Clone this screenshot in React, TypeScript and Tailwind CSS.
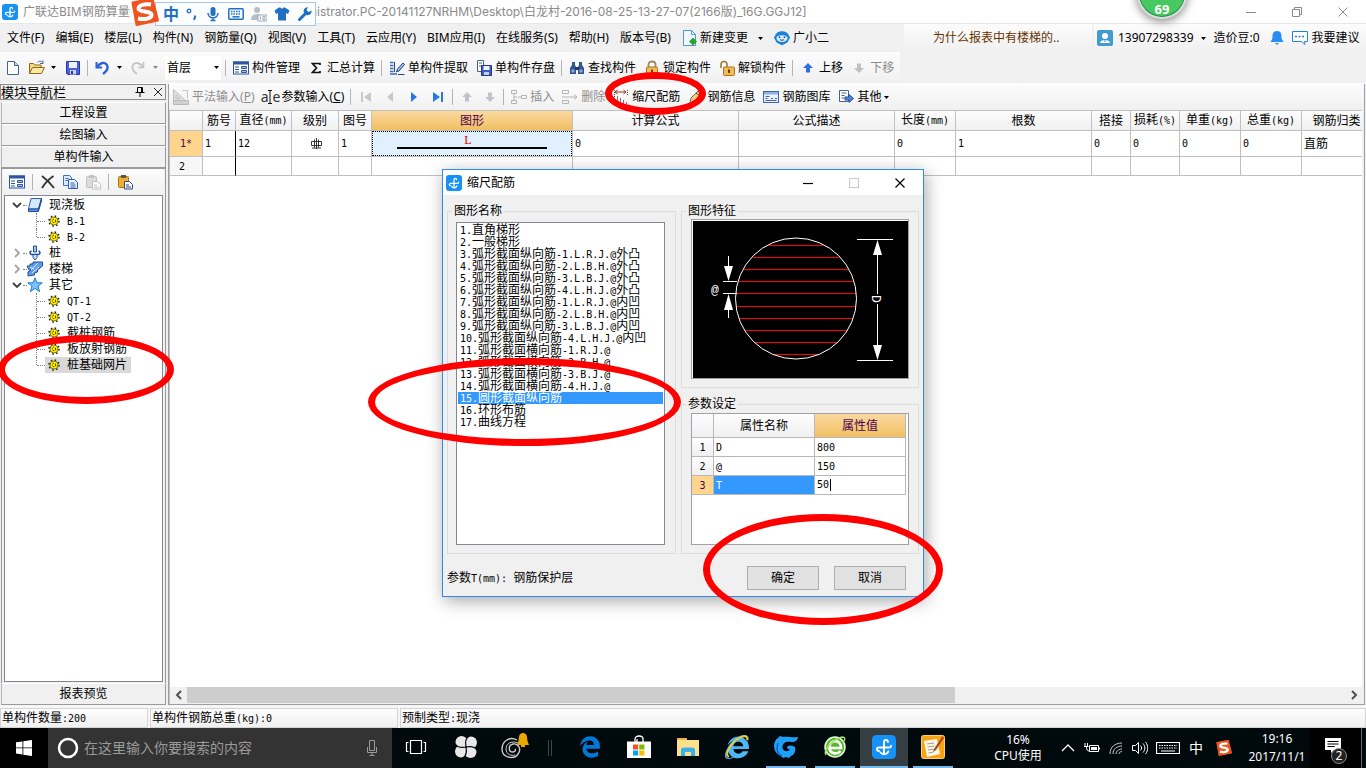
import React from "react";
import { FaEdgeLegacy, FaInternetExplorer } from "react-icons/fa";

/* Mixed-width text: half-width characters use a 6px monospace cell beside 12px ideographs. */
function Mix({ t }: { t: string }) {
  return (
    <>
      {t.split(/([\x20-\x7e]+)/).map((part, i) =>
        i % 2 ? (
          <span key={i} className="whitespace-pre font-['DejaVu_Sans_Mono',monospace] text-[10px]">
            {part}
          </span>
        ) : (
          part
        ),
      )}
    </>
  );
}

function Svg({ children, className = "size-4", box = "0 0 16 16" }: { children: React.ReactNode; className?: string; box?: string }) {
  return (
    <svg viewBox={box} className={`${className} shrink-0`} fill="none" aria-hidden="true">
      {children}
    </svg>
  );
}

/* ---------- icons ---------- */
const AppIcon = ({ className = "size-4" }: { className?: string }) => (
  <Svg className={className} box="0 0 24 24">
    <rect width="24" height="24" rx="4.5" fill="#1592f5" />
    <path d="M12 18.500V7c0-1.200.7-2 1.900-2 1.200 0 2 .8 2 2M12 12.500H7c-1.200 0-2 .7-2 1.700 0 1.100.8 1.800 2 1.800M12 12.500h5.200c1.100 0 1.800-.7 1.800-1.800M8.500 17.500c1 1.200 2.100 1.700 3.500 1.700 2 0 3.600-.9 4.300-2.700" stroke="#fff" strokeWidth="1.900" strokeLinecap="round" />
  </Svg>
);
const Sogou = ({ className }: { className: string }) => (
  <Svg className={className} box="0 0 28 28">
    <path d="M1.500 4.500 21.500 0.500 27 22.500 5.500 27Z" fill="#f0541e" stroke="#f0541e" strokeWidth="2" strokeLinejoin="round" />
    <path d="M20 6.500C14 5.500 7.500 7 7.500 10.500c0 4 13 2 13 6.500 0 3.500-7 5-13.500 3.500" stroke="#fff" strokeWidth="4" />
  </Svg>
);
const NewIcon = () => (
  <Svg>
    <path d="M2.500 1.500h7l4 4v9h-11z" fill="#fff" stroke="#45618f" />
    <path d="M9.500 1.500v4h4" fill="#c8daf2" stroke="#45618f" />
  </Svg>
);
const OpenIcon = () => (
  <Svg>
    <path d="M.5 13.500v-10h4l1.500 1.500h6v3" fill="#f7d77c" stroke="#8c6a1c" />
    <path d="M.5 13.500 3.500 7.500h12l-3 6z" fill="#ffe9a6" stroke="#8c6a1c" />
    <path d="M8.500 2.500c2-2 4-1.500 5 0M14 .5v3h-3" stroke="#45618f" />
  </Svg>
);
const SaveIcon = () => (
  <Svg>
    <path d="M1.500 1.500h13v13h-12l-1-1z" fill="#4660e0" stroke="#2a3a9e" />
    <path d="M4 2h8v6H4z" fill="#eef2ff" />
    <path d="M5 10h6v4.500H5z" fill="#c8d0f0" />
    <path d="M6 11h2v3H6z" fill="#2a3a9e" />
  </Svg>
);
const UndoIcon = () => (
  <Svg>
    <path d="M1.500 2v5.500H7" stroke="#2a62d8" strokeWidth="2" />
    <path d="M2 7C5 2.500 10 1.500 12 5c1.500 3-.5 6.500-4 9" stroke="#2a62d8" strokeWidth="2.400" />
  </Svg>
);
const RedoIcon = () => (
  <Svg>
    <path d="M12.500 2v5.500H7" stroke="#c4c4c4" strokeWidth="1.600" />
    <path d="M12 7C9 2.500 4 1.500 2 5c-1.500 3 .5 6.500 4 9" stroke="#c4c4c4" strokeWidth="1.800" />
  </Svg>
);
const FormIcon = () => (
  <Svg>
    <rect x=".5" y="2" width="15" height="12" fill="#fff" stroke="#2d55a0" />
    <path d="M0 1.500h16v3H0z" fill="#2d55a0" />
    <path d="M2 7h4M2 9.500h4M2 12h4" stroke="#2d55a0" />
    <path d="M8.500 6.500h5v2h-5zM8.500 10.500h5v2h-5z" fill="#a9c0e8" stroke="#2d55a0" />
  </Svg>
);
const SigmaIcon = () => (
  <Svg>
    <path d="M12 5V3.500H4.500L8.500 8l-4 4.500H12V11" stroke="#111" strokeWidth="1.700" />
  </Svg>
);
const ExtractIcon = () => (
  <Svg>
    <path d="M1 2.500h3.500M1 5.500h3.500M1 8.500h3.500M1 11.500h3.500M1 14h7" stroke="#3c68b8" strokeWidth="1.500" />
    <path d="M5.500 2v10" stroke="#24457f" />
    <path d="m7.500 12 1-3 5.500-6 1.500 1.500-5.500 6.500z" fill="#9cc0f0" stroke="#24457f" />
    <path d="M9 14.500h6.500" stroke="#24457f" />
  </Svg>
);
const StoreIcon = () => (
  <Svg>
    <path d="M1.500.5h6v11h-6zM3 3h3M3 6h3" fill="#fff" stroke="#45618f" />
    <path d="M5.500 5.500h10v10h-10z" fill="#3e5ccc" stroke="#22357e" />
    <path d="M7.500 6h6v4h-6z" fill="#eef2ff" />
    <path d="M8 12h5v3H8z" fill="#c8d0f0" />
  </Svg>
);
const FindIcon = () => (
  <Svg>
    <path d="M3 2h3v3l1 2v7H1V8l2-3zM10 2h3v3l2 3v6H9V7l1-2z" fill="#34558e" />
    <path d="M6 7h4v3H6z" fill="#22395f" />
    <path d="M2.500 9.500h3v3h-3zM10.500 9.500h3v3h-3z" fill="#86a9dd" />
  </Svg>
);
const LockIcon = ({ open = false }: { open?: boolean }) => (
  <Svg>
    {open ? (
      <path d="M2 8V4.500C2 .5 8 .5 8 4.500V7" stroke="#9a7a3a" strokeWidth="1.600" />
    ) : (
      <path d="M4.500 8V4.500C4.500.5 11.500.5 11.500 4.500V8" stroke="#9a8a6a" strokeWidth="1.800" />
    )}
    <rect x={open ? 4.5 : 2.5} y="7" width="11" height="8.500" rx="1" fill="#f3bd55" stroke="#a87420" />
    <path d={open ? "M10 9.500v3.500" : "M8 9.500v3.500"} stroke="#6a4410" strokeWidth="2" />
  </Svg>
);
const ArrowV = ({ down = false, color }: { down?: boolean; color: string }) => (
  <Svg>
    <path d={down ? "M8 13 3 8h3V3.500h4V8h3z" : "M8 3l5 5h-3v4.500H6V8H3z"} fill={color} />
  </Svg>
);
const FlatIcon = () => (
  <Svg>
    <path d="M.5 .5v11h12zM3 6v3.500h4z" fill="#e0e0e0" stroke="#bcbcbc" fillRule="evenodd" />
    <path d="M.5 11.500h15v4H.5z" fill="#d0d0d0" stroke="#b8b8b8" />
    <path d="M9 1.500h5.500v8" stroke="#c4c4c4" />
  </Svg>
);
const ParamIcon = () => (
  <span className="flex w-4 shrink-0 items-center justify-center text-sm leading-4 text-[#333]">
    a
    <Svg className="h-4 w-1" box="0 0 4 16">
      <path d="M0 1.500h4M0 14.500h4M2 1.500v13" stroke="#111" />
    </Svg>
    e
  </span>
);
const NavIcon = ({ kind }: { kind: "first" | "prev" | "next" | "last" }) => (
  <Svg>
    {kind === "first" && <path d="M3 3h2v10H3zM13 3v10L6 8z" fill="#c6c8cc" />}
    {kind === "prev" && <path d="M11 3v10L5 8z" fill="#c6c8cc" />}
    {kind === "next" && <path d="M5 3v10l6-5z" fill="#2478e8" />}
    {kind === "last" && <path d="M11 3h2v10h-2zM3 3v10l7-5z" fill="#2478e8" />}
  </Svg>
);
const InsertIcon = () => (
  <Svg>
    <path d="M.5 1.500h5v3h-5zM.5 11.500h5v3h-5zM10.500 6.500h5v3h-5zM3 4.500v7M3 8h3M7 8h3" stroke="#b4b4b4" />
  </Svg>
);
const DeleteIcon = () => (
  <Svg>
    <path d="M.5 1.500h6v3h-6zM.5 11.500h6v3h-6zM0 8h15M12 5.500 15 8l-3 2.500" stroke="#b4b4b4" />
  </Svg>
);
const ScaleIcon = () => (
  <Svg>
    <path d="M2 3h11M4.500 1 2 3l2.500 2M10.500 1 13 3l-2.500 2" stroke="#a03024" />
    <path d="M1.500 1v14M14.500 1v5" stroke="#444" strokeDasharray="1 1" />
    <path d="M4.500 7v8M7.500 9v6M10.500 11v4M13.500 13v2" stroke="#777" />
  </Svg>
);
const PencilIcon = () => (
  <Svg>
    <path d="m2 14 1-5 7-7 4 3-7 7z" fill="#f0d080" stroke="#665" />
    <path d="m8 4 4 3" stroke="#446" />
    <path d="M6 14c2-4 5-3 8-6" stroke="#4a6aa8" strokeWidth="1.500" />
  </Svg>
);
const LibraryIcon = () => (
  <Svg>
    <rect x=".5" y="2.500" width="15" height="11" fill="#eaf1fb" stroke="#3e66a8" />
    <path d="M1 3h14v2.500H1z" fill="#8fb2e4" />
    <path d="M2.500 7.500h4M2.500 9.500h2M8 9.500h2M12 9.500h2M2.500 11.500h11" stroke="#3e66a8" />
  </Svg>
);
const OtherIcon = () => (
  <Svg>
    <path d="M1.500 1.500h9v11h-9zM3.500 4h5M3.500 6.500h3M3.500 9h3" fill="#fff" stroke="#45618f" />
    <path d="M7 8h4V5.500l4.500 4-4.500 4V11H7z" fill="#4d86dc" stroke="#24509c" />
  </Svg>
);
const CopyIcon = () => (
  <Svg>
    <path d="M1.500 1.500h6l2 2v8h-8zM3.500 4.500h3M3.500 6.500h3" fill="#dce9fb" stroke="#3e70c0" />
    <path d="M6.500 5.500h6l3 3v6h-9zM8.500 9h4M8.500 11h5M8.500 13h5" fill="#eaf2fd" stroke="#2f5fb0" />
  </Svg>
);
const PasteIcon = ({ off = false }: { off?: boolean }) => (
  <Svg>
    <rect x="1.500" y="2.500" width="10" height="11" rx="1" fill={off ? "#dcdcdc" : "#eeb030"} stroke={off ? "#c0c0c0" : "#a87410"} />
    <path d="M4 1h5v3H4z" fill={off ? "#c4c4c4" : "#555"} />
    <path d="M7.500 7.500h5l3 3v4.500h-8zM9 11h3M9 13h5" fill="#fff" stroke={off ? "#c0c0c0" : "#2f4a80"} />
  </Svg>
);
const GearIcon = () => (
  <Svg className="size-3" box="0 0 12 12">
    <circle cx="6" cy="6" r="5" stroke="#222" strokeWidth="1.500" strokeDasharray="1.600 2.330" />
    <circle cx="6" cy="6" r="4" fill="#ffee00" stroke="#554e00" strokeWidth=".7" />
    <circle cx="6" cy="6" r="1.700" stroke="#222" strokeDasharray="1.500 1.170" />
  </Svg>
);
const SlabIcon = () => (
  <Svg>
    <path d="M4 1.500h10.500l-3 10.500H1.500z" fill="#d4e8ff" stroke="#2a5cb4" />
    <path d="M1.500 12h10v2.500h-10zM14.500 1.500v2.500l-3 10V12z" fill="#5a92e4" stroke="#1e4c9c" />
  </Svg>
);
const PileIcon = () => (
  <Svg>
    <path d="M6.500 1h3v6h-3z" fill="#9cc4f4" stroke="#1e4c9c" />
    <path d="M4.500 6c-2 .8-2 3 0 3.500h7c2-.5 2-2.700 0-3.500" stroke="#1e4c9c" strokeWidth="1.500" />
    <path d="M6 9.500v3L8 15l2-2.500v-3z" fill="#cfe2fb" stroke="#1e4c9c" />
  </Svg>
);
const StairIcon = () => (
  <Svg>
    <path d="M0 5h3V3h3V1h9.500v4l-5 4v2l-3 1v2l-6.500 1v-4l3-2H2z" fill="#5e9cec" stroke="#1e4c9c" />
    <path d="m4 9 7-7M5 12l7-6M3 6l4 2" stroke="#dcecff" />
  </Svg>
);
const StarIcon = () => (
  <Svg>
    <path d="m8 .8 1.900 5h5.300l-4.200 3.300 1.600 5.600L8 11.400l-4.600 3.300L5 9.100.8 5.800h5.300z" fill="#7cc2fa" stroke="#1e7cd0" />
  </Svg>
);
const Chevron = ({ open }: { open: boolean }) => (
  <Svg className="size-3" box="0 0 12 12">
    <path d={open ? "m2 4 4 4 4-4" : "m4 2 4 4-4 4"} stroke={open ? "#404040" : "#a6a6a6"} strokeWidth="1.800" />
  </Svg>
);
const Caret = ({ off = false }: { off?: boolean }) => (
  <svg viewBox="0 0 5 3" className="h-[3px] w-[5px] shrink-0" aria-hidden="true">
    <path d="M0 0h5L2.500 3z" fill={off ? "#888" : "#000"} />
  </svg>
);

/* ---------- shared controls ---------- */
function Tool({ icon, label, hot, off, drop }: { icon: React.ReactNode; label?: string; hot?: string; off?: boolean; drop?: boolean }) {
  return (
    <button type="button" disabled={off} className={`flex shrink-0 items-center gap-[3px] whitespace-nowrap px-0.5 leading-4 ${off ? "text-[#8d8d8d]" : "text-black"}`}>
      {icon}
      {label && (
        <span>
          {label}
          {hot && (
            <>
              (<u>{hot}</u>)
            </>
          )}
        </span>
      )}
      {drop && <Caret />}
    </button>
  );
}
const Drop = ({ off = false }: { off?: boolean }) => (
  <button type="button" aria-label="▾" className="-ml-1 flex h-4 w-3 items-center justify-center">
    <Caret off={off} />
  </button>
);
const Sep = () => <span className="h-4 w-0.5 shrink-0 border-l border-[#b4b4b4]" />;

const MENUS = ["文件(F)", "编辑(E)", "楼层(L)", "构件(N)", "钢筋量(Q)", "视图(V)", "工具(T)", "云应用(Y)", "BIM应用(I)", "在线服务(S)", "帮助(H)", "版本号(B)"];

function TitleBar() {
  return (
    <header className="flex h-[23px] items-center bg-white pl-0.5 text-[#8a8a8a]">
      <AppIcon />
      <span className="ml-[5px] w-[108px] shrink-0 overflow-hidden whitespace-nowrap">广联达BIM钢筋算量</span>
      <div className="relative z-20 mt-[5px] flex h-6 w-[185px] shrink-0 items-center">
        <Sogou className="z-10 -mt-1 size-7" />
        <div className="-ml-1 flex h-6 flex-1 items-center gap-[7px] border border-[#a9c6e4] bg-[#fbfdff] pl-[7px] text-[#1f6fc4]">
          <span className="w-4 text-base font-bold leading-4">中</span>
          <Svg className="h-4 w-3" box="0 0 12 16">
            <circle cx="3" cy="5" r="1.800" stroke="#1f6fc4" strokeWidth="1.300" />
            <path d="M9 9.500v1.500c0 1-.5 2-1.500 2.500" stroke="#1f6fc4" strokeWidth="2" />
          </Svg>
          <Svg>
            <rect x="5.500" y="1" width="5" height="9" rx="2.500" fill="#1f6fc4" />
            <path d="M3 7c0 6.500 10 6.500 10 0M8 12v3M5.500 14.500h5" stroke="#1f6fc4" strokeWidth="1.500" />
          </Svg>
          <Svg>
            <rect x=".8" y="2.800" width="14.400" height="10.400" rx="1" stroke="#1f6fc4" strokeWidth="1.500" />
            <path d="M3 5.500h10M3 8h10" stroke="#1f6fc4" strokeWidth="1.500" strokeDasharray="1.500 1" />
            <path d="M4.500 10.800h7" stroke="#1f6fc4" strokeWidth="1.500" />
          </Svg>
          <Svg>
            <circle cx="6" cy="4" r="3" fill="#b4bec8" />
            <path d="M0 14c0-8 12-8 12 0z" fill="#b4bec8" />
            <rect x="7" y="9" width="9" height="6" fill="#fff" stroke="#9aa6b2" />
            <path d="M9.500 10.500v3M12 10.500h2v3h-2z" stroke="#9aa6b2" />
          </Svg>
          <Svg>
            <path d="M5 1.500h1.500c.5 1.500 2.500 1.500 3 0H11l4.500 3L14 8l-2-1v7.500H4V7L2 8 .5 4.500z" fill="#1f6fc4" />
          </Svg>
          <Svg>
            <path d="M2.500 13.500 9 7" stroke="#1f6fc4" strokeWidth="3" strokeLinecap="round" />
            <path d="M14.500 4.500A4 4 0 1 1 11 1.200L9.500 4 11.500 6z" fill="#1f6fc4" />
          </Svg>
        </div>
      </div>
      <span className="-ml-1.5 whitespace-nowrap font-['Inter','Noto_Sans_CJK_SC',sans-serif]">nistrator.PC-20141127NRHM\Desktop\白龙村-2016-08-25-13-27-07(2166版)_16G.GGJ12]</span>
      <div className="ml-auto flex h-full items-center">
        {["M0 5.500h10", "M.5 2.500h7v7h-7zM2.500 2.500v-2h7v7h-2", "m.5.5 9 9M9.500.5l-9 9"].map((d, i) => (
          <button key={d} type="button" aria-label={["最小化", "还原", "关闭"][i]} className="flex h-full w-[46px] items-center justify-center">
            <Svg className="size-2.5" box="0 0 10 10">
              <path d={d} stroke="#8a8a8a" />
            </Svg>
          </button>
        ))}
      </div>
    </header>
  );
}

function MenuBar() {
  return (
    <div className="flex h-[29px] items-stretch border-t border-[#e8e8e8] bg-[#f0f0f0]">
      <nav className="flex items-center gap-[11px] whitespace-nowrap pl-[7px]">
        {MENUS.map((m) => (
          <button key={m} type="button">{m}</button>
        ))}
        <button type="button" className="flex items-center gap-0.5">
          <Svg>
            <path d="M1.500.5h8l4 4v11h-12z" fill="#f2f8ff" stroke="#4a9ad4" />
            <path d="M9.500.5v4h4" stroke="#4a9ad4" />
            <path d="M11 7.500 15 11.500 11 15.500 7 11.500z" fill="#2aa52a" />
          </Svg>
          新建变更
        </button>
        <Drop />
        <button type="button" className="-ml-1 flex items-center gap-[3px]">
          <Svg>
            <path d="M0 7c1-.5 1-2 2-3 2-3 4-2 6-3 2 1 4 0 6 3 1 1 1 2.500 2 3 0 2-1 2-1.500 3.500C13 14 10.500 13.500 8 15.500 5.500 13.500 3 14 1.500 10.500 1 9 0 9 0 7z" fill="#1d82d6" />
            <path d="M2.500 7.500c1-3 10-3 11 0 .5 6-11.500 6-11 0z" fill="#d4ecff" />
            <path d="M5.500 6.500v1.500M10.500 6.500v1.500" stroke="#12508c" strokeWidth="1.500" />
            <path d="M6 9.500c1 1 3 1 4 0" stroke="#12508c" />
          </Svg>
          广小二
        </button>
      </nav>
      <div className="ml-auto flex w-[188px] items-center bg-linear-to-b from-[#fcfcfc] to-[#f0f0f0] pl-[29px] text-[#663300]">为什么报表中有楼梯的..</div>
      <div className="ml-0.5 flex w-[272px] items-center whitespace-nowrap bg-linear-to-b from-[#fcfcfc] to-[#f0f0f0] pl-[3px]">
        <Svg>
          <rect width="16" height="16" rx="2" fill="#3f9bd0" />
          <circle cx="8" cy="6" r="3" fill="#fff" />
          <path d="M3 13c0-4 10-4 10 0z" fill="#fff" />
          <path d="M8 9v3" stroke="#3f9bd0" />
        </Svg>
        <span className="ml-[5px] mr-[7px]">13907298339</span>
        <Caret />
        <span className="mx-2">造价豆:0</span>
        <Svg className="mx-px size-4">
          <path d="M8 1c-4 0-4.500 3-4.500 6C3.500 9.500 2 10.500 1.500 12h13c-.5-1.500-2-2.500-2-5 0-3-.5-6-4.500-6z" fill="#2a8cf0" />
          <path d="M6 13h4l-2 2z" fill="#2a8cf0" />
        </Svg>
        <Svg className="ml-1.5 mr-1 size-4">
          <path d="M.5 1.500h15v10h-3l.5 3-3.500-3h-9z" fill="#fff" stroke="#2a7fd8" />
          <path d="M3 6.500h10" stroke="#2a7fd8" strokeWidth="1.500" strokeDasharray="2 1.500" />
        </Svg>
        <button type="button">我要建议</button>
      </div>
    </div>
  );
}

function MainToolbar() {
  return (
    <div className="flex h-[31px] bg-[#f0f0f0]">
      <div className="flex h-[31px] items-center gap-1 bg-linear-to-b from-[#fcfcfc] to-[#f0f0f0] pl-[3px] pr-1">
        <Tool icon={<NewIcon />} />
        <Tool icon={<OpenIcon />} />
        <Drop />
        <Tool icon={<SaveIcon />} />
        <Sep />
        <Tool icon={<UndoIcon />} />
        <Drop />
        <Tool icon={<RedoIcon />} off />
        <Drop off />
        <label className="flex h-6 w-14 items-center bg-white">
          <select aria-label="楼层" className="w-full appearance-none bg-transparent pl-0.5 outline-none">
            <option>首层</option>
          </select>
          <span className="pr-0.5"><Caret /></span>
        </label>
        <Sep />
        <Tool icon={<FormIcon />} label="构件管理" />
        <Tool icon={<SigmaIcon />} label="汇总计算" />
        <Sep />
        <Tool icon={<ExtractIcon />} label="单构件提取" />
        <Tool icon={<StoreIcon />} label="单构件存盘" />
        <Sep />
        <Tool icon={<FindIcon />} label="查找构件" />
        <Tool icon={<LockIcon />} label="锁定构件" />
        <Tool icon={<LockIcon open />} label="解锁构件" />
        <Sep />
        <Tool icon={<ArrowV color="#2f6fe0" />} label="上移" />
        <Tool icon={<ArrowV down color="#c0c0c0" />} label="下移" off />
      </div>
    </div>
  );
}

/* ---------- left pane ---------- */
function TreeGroup({ icon, label, open = false, items = [] }: { icon: React.ReactNode; label: string; open?: boolean; items?: string[] }) {
  return (
    <li>
      <div className="flex h-4 items-center pl-1.5">
        <Chevron open={open} />
        <span className="w-1 border-t border-dotted border-[#808080]" />
        {icon}
        <span className="ml-1.5"><Mix t={label} /></span>
      </div>
      {items.length > 0 && (
        <ul className="ml-[31px]">
          {items.map((it, i) => (
            <li key={it} className="flex h-4 items-center">
              <span className={`w-px self-start border-l border-dotted border-[#808080] ${i === items.length - 1 ? "h-2" : "h-4"}`} />
              <span className="w-2 border-t border-dotted border-[#808080]" />
              <span className={`flex h-4 items-center gap-[7px] pl-[3px] pr-1 ${it === "桩基础网片" ? "bg-[#d9d9d9]" : ""}`}>
                <GearIcon />
                <span><Mix t={it} /></span>
              </span>
            </li>
          ))}
        </ul>
      )}
    </li>
  );
}

const NavButton = ({ label }: { label: string }) => (
  <button type="button" className="h-[22px] w-full shrink-0 border border-t-[#fff] border-r-[#9a9a9a] border-b-[#9a9a9a] border-l-[#b4b4b4] bg-[#f0f0f0]">{label}</button>
);

function NavPane() {
  return (
    <aside className="flex w-[166px] shrink-0 flex-col">
      <div className="flex h-4 items-center border border-[#8c8c8c] text-[13px] leading-4">
        <span className="flex-1">模块导航栏</span>
        <button type="button" aria-label="固定" className="mr-2 flex w-2.5">
          <Svg className="size-2.5" box="0 0 10 10">
            <path d="M2.500.5h5v5h-5zM6.500.5v5M.5 5.500h9M5 5.500V10" stroke="#000" />
          </Svg>
        </button>
        <button type="button" aria-label="关闭" className="mr-0.5 flex w-2.5">
          <Svg className="size-2.5" box="0 0 10 10">
            <path d="m1 1 8 8M9 1 1 9" stroke="#222" />
          </Svg>
        </button>
      </div>
      <div className="flex flex-1 flex-col pl-px pt-0.5">
        <NavButton label="工程设置" />
        <NavButton label="绘图输入" />
        <NavButton label="单构件输入" />
        <div className="flex flex-1 flex-col border-x border-t border-[#9a9a9a] px-px">
          <div className="flex h-[26px] items-center gap-[7px] bg-linear-to-b from-[#fcfcfc] to-[#f0f0f0] pl-1.5">
            <FormIcon />
            <Sep />
            <Svg className="size-[14px]" box="0 0 14 14">
              <path d="M1 1c4 3 8 7 12 12M12.500 1C8 4 4 8 1 13" stroke="#333" strokeWidth="1.800" />
            </Svg>
            <CopyIcon />
            <PasteIcon off />
            <Sep />
            <PasteIcon />
          </div>
          <ul className="mx-px mb-px flex-1 border border-[#828790] bg-white pt-px">
            <TreeGroup icon={<SlabIcon />} label="现浇板" open items={["B-1", "B-2"]} />
            <TreeGroup icon={<PileIcon />} label="桩" />
            <TreeGroup icon={<StairIcon />} label="楼梯" />
            <TreeGroup icon={<StarIcon />} label="其它" open items={["QT-1", "QT-2", "截桩钢筋", "板放射钢筋", "桩基础网片"]} />
          </ul>
        </div>
        <NavButton label="报表预览" />
      </div>
    </aside>
  );
}

/* ---------- grid ---------- */
const RebarMark = () => (
  <Svg className="mx-auto size-[11px]" box="0 0 11 11">
    <path d="M5.500 0v11M3.500 1.500v8M7.500 1.500v8M.5 3.500h10v4H.5zM1 10h9" stroke="#222" strokeWidth=".9" />
  </Svg>
);

const HEADS = ["", "筋号", "直径(mm)", "级别", "图号", "图形", "计算公式", "公式描述", "长度(mm)", "根数", "搭接", "损耗(%)", "单重(kg)", "总重(kg)", "钢筋归类"];
const WIDTHS = [33, 33, 56, 47, 33, 201, 166, 156, 61, 136, 39, 49, 61, 61, 70];
const ROW = ["1*", "1", "12", "", "1", "", "0", "", "0", "1", "0", "0", "0", "0", "直筋"];

function RebarGrid() {
  return (
    <div className="flex-1 overflow-hidden bg-white">
      <table className="w-[1202px] table-fixed border-separate border-spacing-0 leading-4">
        <colgroup>
          {WIDTHS.map((w, i) => (
            <col key={i} style={{ width: w }} />
          ))}
        </colgroup>
        <thead>
          <tr className="h-5">
            {HEADS.map((h, i) => (
              <th
                key={i}
                className={`overflow-hidden whitespace-nowrap border-b border-r border-[#c0c0c0] p-0 font-normal ${
                  h === "图形" ? "bg-linear-to-b from-[#fad8a0] to-[#f0c060] text-[#500050]" : "bg-linear-to-b from-[#fdfdfd] to-[#f0f0f0]"
                }`}
              >
                <Mix t={h} />
              </th>
            ))}
          </tr>
        </thead>
        <tbody>
          <tr className="h-[26px]">
            {ROW.map((c, i) => {
              if (i === 0)
                return (
                  <th key={i} className="border-b border-r border-[#c0c0c0] bg-[#ffd48c] p-0 font-normal text-[#500050]">
                    <Mix t={c} />
                  </th>
                );
              if (i === 5)
                return (
                  <td key={i} className="border-b border-r border-[#c0c0c0] p-0">
                    <div className="flex h-[25px] flex-col items-center border border-dotted border-black bg-[#e0f0ff] pt-0.5">
                      <span className="-ml-2 font-['Liberation_Serif',serif] leading-[13px] text-[#e00000]">L</span>
                      <span className="h-0.5 w-[150px] bg-black" />
                    </div>
                  </td>
                );
              return (
                <td key={i} className={`border-b border-b-[#c0c0c0] border-r py-0 pl-0.5 pr-0 ${i === 1 ? "border-r-black" : "border-r-[#c0c0c0]"}`}>
                  {i === 3 ? <RebarMark /> : <Mix t={c} />}
                </td>
              );
            })}
          </tr>
          <tr className="h-[19px]">
            {ROW.map((_, i) =>
              i === 0 ? (
                <th key={i} className="border-b border-r border-[#c0c0c0] bg-[#f7f7f7] p-0 pr-2 font-normal">
                  <Mix t="2" />
                </th>
              ) : (
                <td key={i} className={`border-b border-b-[#c0c0c0] border-r p-0 ${i === 1 ? "border-r-black" : "border-r-[#c0c0c0]"}`} />
              ),
            )}
          </tr>
        </tbody>
      </table>
    </div>
  );
}

function Workspace() {
  return (
    <main className="ml-0.5 mr-px flex min-w-0 flex-1 flex-col border-x border-b border-[#9c9ea4] bg-[#f0f0f0]">
      <div className="flex h-[26px] items-center gap-1 bg-linear-to-b from-[#fcfcfc] to-[#f0f0f0] pl-0.5">
        <Tool icon={<FlatIcon />} label="平法输入" hot="P" off />
        <Tool icon={<ParamIcon />} label="参数输入" hot="C" />
        <Sep />
        <Tool icon={<NavIcon kind="first" />} off />
        <Tool icon={<NavIcon kind="prev" />} off />
        <Tool icon={<NavIcon kind="next" />} />
        <Tool icon={<NavIcon kind="last" />} />
        <div className="flex items-center gap-[3px]">
          <Sep />
          <Tool icon={<ArrowV color="#c0c4ca" />} off />
          <Tool icon={<ArrowV down color="#c0c4ca" />} off />
          <Sep />
        </div>
        <Tool icon={<InsertIcon />} label="插入" off />
        <Tool icon={<DeleteIcon />} label="删除" off />
        <Tool icon={<ScaleIcon />} label="缩尺配筋" />
        <Tool icon={<PencilIcon />} label="钢筋信息" />
        <Tool icon={<LibraryIcon />} label="钢筋图库" />
        <Tool icon={<OtherIcon />} label="其他" drop />
      </div>
      <div className="mr-0.5 flex flex-1 flex-col border-l border-t border-[#c0c0c0]">
        <RebarGrid />
        <div className="mb-px flex h-4 items-center bg-[#f0f0f0]">
          <button type="button" aria-label="向左滚动" className="flex w-[17px] justify-center">
            <Svg className="size-2.5" box="0 0 10 10"><path d="M7 1 3 5l4 4" stroke="#505050" strokeWidth="2" /></Svg>
          </button>
          <div className="flex h-4 flex-1"><div className="w-[66.3%] bg-[#cdcdcd]" /></div>
          <button type="button" aria-label="向右滚动" className="flex w-[17px] justify-center">
            <Svg className="size-2.5" box="0 0 10 10"><path d="m3 1 4 4-4 4" stroke="#505050" strokeWidth="2" /></Svg>
          </button>
        </div>
      </div>
    </main>
  );
}

/* ---------- dialog ---------- */
const SHAPES = [
  "直角梯形", "一般梯形", "弧形截面纵向筋-1.L.R.J.@外凸", "弧形截面纵向筋-2.L.B.H.@外凸", "弧形截面纵向筋-3.L.B.J.@外凸",
  "弧形截面纵向筋-4.L.H.J.@外凸", "弧形截面纵向筋-1.L.R.J.@内凹", "弧形截面纵向筋-2.L.B.H.@内凹", "弧形截面纵向筋-3.L.B.J.@内凹",
  "弧形截面纵向筋-4.L.H.J.@内凹", "弧形截面横向筋-1.R.J.@", "弧形截面横向筋-2.B.H.@", "弧形截面横向筋-3.B.J.@",
  "弧形截面横向筋-4.H.J.@", "圆形截面纵向筋", "环形布筋", "曲线方程",
];

function SectionDrawing() {
  const ys = [24, 36, 48, 60, 72, 85, 97, 109, 121, 133];
  return (
    <svg viewBox="0 0 215 157" className="block h-[157px] w-full bg-black" fill="none" role="img" aria-label="圆形截面">
      {ys.map((y) => {
        const h = Math.round(Math.sqrt(60 * 60 - (y - 77.5) * (y - 77.5)));
        return <rect key={y} x={103 - h} y={y} width={2 * h} height="1" fill="#f00" shapeRendering="crispEdges" />;
      })}
      <circle cx="103" cy="77.500" r="60.500" stroke="#fff" />
      <path d="M164 18.500h36M164 139.500h36M184.500 20v53M184.500 83v55M30 60.500h14M30 72.500h14M35.500 35v12M35.500 84v13" stroke="#fff" />
      <path d="m184.500 19 4.500 15h-9zM184.500 139l4.500-15h-9zM35.500 60l4.500-15h-9zM35.500 73l4.500 16h-9z" fill="#fff" />
      <text x="18" y="73" fill="#fff" fontSize="13" fontFamily="Liberation Mono, monospace">@</text>
      <text x="0" y="0" transform="translate(179 74) rotate(90)" fill="#fff" fontSize="13" fontFamily="Liberation Mono, monospace">D</text>
    </svg>
  );
}

const Legend = ({ children }: { children: React.ReactNode }) => <legend className="ml-1 px-0.5 leading-4">{children}</legend>;

function ScaleDialog() {
  const head = "border-b border-r border-[#b8b8b8] p-0 font-normal";
  const gray = "bg-linear-to-b from-[#fdfdfd] to-[#f0f0f0]";
  return (
    <div role="dialog" aria-label="缩尺配筋" className="absolute left-[442px] top-[169px] z-10 flex w-[482px] flex-col border border-[#2e8bef] bg-[#f0f0f0] shadow-[2px_4px_16px_rgba(0,0,0,0.35)]">
      <div className="flex h-[25px] items-center bg-white pl-[3px]">
        <AppIcon />
        <span className="ml-[5px] flex-1">缩尺配筋</span>
        {["M0 5.500h10", "M.5.500h9v9h-9z", "m.5.500 9 9M9.500.500l-9 9"].map((d, i) => (
          <button key={d} type="button" disabled={i === 1} aria-label={["最小化", "最大化", "关闭"][i]} className="flex h-full w-[46px] items-center justify-center">
            <Svg className="size-2.5" box="0 0 10 10"><path d={d} stroke={i === 1 ? "#ccc" : "#000"} strokeWidth="1.200" /></Svg>
          </button>
        ))}
      </div>
      <div className="flex gap-[5px] pl-1 pr-1 pt-2">
        <fieldset className="flex w-[229px] flex-col border border-[#dcdcdc] pb-2">
          <Legend>图形名称</Legend>
          <ul role="listbox" aria-label="图形名称" className="ml-2 mr-2.5 mt-[3px] h-[323px] border border-[#828790] bg-white p-px">
            {SHAPES.map((s, i) => (
              <li key={s} role="option" aria-selected={i === 14} className={`flex h-3 items-center whitespace-nowrap pl-0.5 leading-3 ${i === 14 ? "bg-[#3399ff] text-white" : ""}`}>
                <span><Mix t={`${i + 1}.${s}`} /></span>
              </li>
            ))}
          </ul>
        </fieldset>
        <div className="flex flex-1 flex-col gap-2">
          <fieldset className="border border-[#dcdcdc] pb-2">
            <Legend>图形特征</Legend>
            <div className="mx-[9px] border border-[#a0a0a0] bg-white pl-px pt-px"><SectionDrawing /></div>
          </fieldset>
          <fieldset className="border border-[#dcdcdc] pb-2">
            <Legend>参数设定</Legend>
            <div className="mx-[9px] mt-px h-[132px] border border-[#a0a0a6] bg-white">
              <table className="w-[214px] table-fixed border-separate border-spacing-0 leading-4">
                <colgroup><col className="w-[22px]" /><col className="w-[101px]" /><col className="w-[91px]" /></colgroup>
                <thead>
                  <tr className="h-6">
                    <th className={`${head} ${gray}`} />
                    <th className={`${head} ${gray}`}>属性名称</th>
                    <th className={`${head} bg-linear-to-b from-[#fad8a0] to-[#f0c060] text-[#500050]`}>属性值</th>
                  </tr>
                </thead>
                <tbody>
                  {[["D", "800"], ["@", "150"], ["T", "50"]].map(([k, v], i) => (
                    <tr key={k} className="h-[19px]">
                      <th className={`${head} ${i === 2 ? "bg-[#ffd48c] text-[#500050]" : gray}`}><Mix t={`${i + 1}`} /></th>
                      <td className={`border-b border-r border-[#b8b8b8] py-0 pl-0.5 pr-0 ${i === 2 ? "bg-[#3399ff] text-white" : ""}`}><Mix t={k} /></td>
                      <td className="border-b border-r border-[#b8b8b8] py-0 pl-px pr-0">
                        {i === 2 ? (
                          <span className="flex items-center">
                            <input aria-label="T" defaultValue={v} className="h-4 w-[14px] border-0 bg-transparent p-0 pl-px font-['DejaVu_Sans_Mono',monospace] text-[10px] outline-none" />
                            <span className="h-3 w-px bg-black" />
                          </span>
                        ) : (
                          <span className="pl-px"><Mix t={v} /></span>
                        )}
                      </td>
                    </tr>
                  ))}
                </tbody>
              </table>
            </div>
          </fieldset>
        </div>
      </div>
      <div className="flex items-center pb-1.5 pl-1 pr-[17px] pt-3">
        <span className="flex-1"><Mix t="参数T(mm): 钢筋保护层" /></span>
        <button type="button" className="h-6 w-[72px] border border-[#adadad] bg-[#e1e1e1]">确定</button>
        <button type="button" className="ml-[15px] h-6 w-[72px] border border-[#adadad] bg-[#e1e1e1]">取消</button>
      </div>
    </div>
  );
}

/* ---------- status bar and taskbar ---------- */
function StatusBar() {
  const cell = "flex h-5 items-center border border-[#d4d4d4] bg-linear-to-b from-[#fefefe] to-[#f0f0f0] pl-px";
  return (
    <footer className="flex gap-0.5 bg-[#f6f6f6] pt-[3px]">
      <div className={`${cell} w-[148px]`}><span><Mix t="单构件数量:200" /></span></div>
      <div className={`${cell} w-[248px]`}><span><Mix t="单构件钢筋总重(kg):0" /></span></div>
      <div className={`${cell} flex-1`}><span><Mix t="预制类型:现浇" /></span></div>
    </footer>
  );
}

function Task({ children, label, run, active }: { children: React.ReactNode; label: string; run?: boolean; active?: boolean }) {
  return (
    <button type="button" aria-label={label} className={`flex h-10 w-12 shrink-0 flex-col items-center ${active ? "bg-[#353f43]" : ""}`}>
      <span className="flex flex-1 items-center">{children}</span>
      <span className={`h-0.5 ${active ? "w-12" : "w-10"} ${run ? "bg-[#76b9ed]" : ""}`} />
    </button>
  );
}

function Taskbar() {
  return (
    <footer className="flex h-10 items-center bg-[#00090c] text-white">
      <button type="button" aria-label="开始" className="flex h-10 w-12 items-center justify-center bg-black">
        <Svg><path d="m0 2.300 6.500-.9v6.100H0zM7.300 1.300 16 0v7.500H7.300zM0 8.300h6.500v6.200L0 13.600zM7.300 8.300H16V16l-8.700-1.300z" fill="#fff" /></Svg>
      </button>
      <label className="flex h-10 w-[344px] items-center bg-[#333] pl-[9px] pr-3">
        <Svg className="size-[22px]" box="0 0 22 22"><circle cx="11" cy="11" r="9" stroke="#fff" strokeWidth="2.500" /></Svg>
        <input aria-label="搜索" placeholder="在这里输入你要搜索的内容" className="ml-[5px] min-w-0 flex-1 bg-transparent text-sm outline-none placeholder:text-[#9a9a9a]" />
        <Svg><path d="M5.500 .5h5v10h-5zM3.500 7v5.500h9V7M8 12.500v3M5.500 15.500h5" stroke="#9a9a9a" /></Svg>
      </label>
      <Task label="任务视图">
        <Svg className="h-4 w-[22px]" box="0 0 22 16"><path d="M5.500 1.500h11v13h-11zM3.500 3.500h-2v9h2M18.500 3.500h2v9h-2" stroke="#fff" strokeWidth="1.200" /></Svg>
      </Task>
      <div className="ml-0.5 flex">
        <Task label="搜狗">
          <Svg className="size-6" box="0 0 24 24">
            <g fill="#e8e8e8">
              <circle cx="7.500" cy="7" r="6" />
              <circle cx="17" cy="7.500" r="6" />
              <circle cx="16.500" cy="17" r="6" />
              <circle cx="7" cy="16.500" r="6" />
            </g>
            <path d="M12 12C7 13 3 12 1 9M12 12C11 7 12 3 15 1M12 12c5-1 9 0 11 3M12 12c1 5 0 9-3 11" stroke="#00090c" strokeWidth="1.200" />
          </Svg>
        </Task>
        <Task label="助手">
          <Svg className="h-7 w-8" box="0 0 32 28">
            <path d="M19 7C12 3 4 8 4 16c0 9 12 11 16 5 4-5 0-11-5-10-5 1-5 8 0 8 2 0 3-2 2-3" stroke="#ccc" strokeWidth="1.400" />
            <path d="M20 10C13 7 8 11 8 16c0 6 6 7 9 6" stroke="#ccc" />
            <path d="M25 0c-5 0-4 6-4.500 8L19 12h12l-1.500-4C29 6 30 0 25 0zM23 12h4v2h-4z" fill="#e8a800" />
          </Svg>
        </Task>
      </div>
      <span className="mr-3.5 ml-2.5 flex h-4 w-1 border-x border-[#444]" />
      <div className="flex gap-px">
        <Task label="Edge"><FaEdgeLegacy className="size-[22px] text-[#0078d7]" /></Task>
        <Task label="Store">
          <Svg className="size-6" box="0 0 24 24">
            <path d="M8 7V4c0-4 8-4 8 0v3M10 7V4" stroke="#fff" strokeWidth="1.300" />
            <path d="M0 6.500h24V23H0z" fill="#fff" />
            <path d="M6 9.500h5.200v5H6z" fill="#f25022" /><path d="M12.200 9.500h5.200v5h-5.200z" fill="#7fba00" />
            <path d="M6 15.500h5.200v5H6z" fill="#00a4ef" /><path d="M12.200 15.500h5.200v5h-5.200z" fill="#ffb900" />
          </Svg>
        </Task>
        <Task label="资源管理器">
          <Svg className="size-6" box="0 0 24 24">
            <path d="M1 3h10v4H1z" fill="#e8b84a" /><path d="M1 5h22v16H1z" fill="#fce08c" />
            <path d="M5 21v-7l2-1.500h10l2 1.500v7h-4v-4H9v4z" fill="#3ab0e8" />
          </Svg>
        </Task>
        <Task label="Internet Explorer">
          <span className="relative flex">
            <FaInternetExplorer className="size-6 text-[#4db8f4]" />
            <Svg className="absolute inset-0 size-6" box="0 0 24 24"><path d="M4 22C-1 19 6 8 14 3c5-3 9-2 8 2" stroke="#f8c830" strokeWidth="1.800" /></Svg>
          </span>
        </Task>
        <Task label="广联达" run>
          <Svg className="size-6" box="0 0 24 24">
            <path d="M24 2c0 3-3 5-6 5-5-1-9 0-9.500 4.500C8 16 14 18 16 14c-1 .5-3 0-3-2 2-2 5-2 8 0 1 5-1 8-4 9l-2 2-3-1-3 1-2-2C2 19 0 15 0 11c0-4 2-7 4-8l2-2 3 1c5-1 9 1 15 0z" fill="#1ea0f8" />
            <path d="M8 21C3 19 2 13 4 8" stroke="#0a60c0" strokeWidth="1.500" />
          </Svg>
        </Task>
        <Task label="浏览器" run>
          <Svg className="size-6" box="0 0 24 24">
            <circle cx="12" cy="12" r="10" fill="#58b82c" stroke="#eafbe0" strokeWidth="1.500" />
            <path d="M6 13h12c0-9-11-9-11.500-1-.5 7 8 8 11 4" stroke="#fff" strokeWidth="2.600" />
            <path d="M3 20C0 15 9 5 19 2c4 0 3 3 1 5" stroke="#a4e070" strokeWidth="1.500" />
          </Svg>
        </Task>
        <Task label="钢筋算量" run active><AppIcon className="size-6" /></Task>
        <Task label="便笺" run>
          <Svg className="size-6" box="0 0 24 24">
            <rect x=".5" y=".5" width="23" height="23" rx="2" fill="#f7a414" stroke="#ffd060" />
            <path d="m3 6 13-2 3 15-13 3z" fill="#fff8e4" />
            <path d="m6 9 7-1M6.500 12l7-1M7 15l6-1M7.500 18l5-1" stroke="#999" />
            <path d="M21.500 1 13 14l-1 3 3-2L23 3z" fill="#b4441c" />
          </Svg>
        </Task>
      </div>
      <div className="ml-auto flex h-10 items-center text-center leading-4">
        <div className="w-16">16%<br />CPU使用</div>
        <div className="ml-2.5 flex items-center gap-2">
          <Svg><path d="m2 11 6-6 6 6" stroke="#fff" strokeWidth="1.300" /></Svg>
          <Svg><path d="M5.500 5.500h9v6h-9zM15.500 7.500v2M1 3v3M3.500 3v3M0 6.500h4.500M2.500 7c0 3 1 4 3 4" stroke="#fff" /><path d="M7 7h6v3H7z" fill="#fff" /></Svg>
          <Svg>
            <path d="M2 14C2 7 7 3 14 3M5 14c0-5 4-8 9-8M8 14c0-3 3-5 6-5M11 14c0-2 1-2 3-2.500" stroke="#ccc" />
          </Svg>
          <Svg><path d="M.5 5.500h3l3-3v11l-3-3h-3zM8.500 5.500c1.500 2 1.500 3 0 5M11 3.500c2.500 3 2.500 6 0 9M13.500 2c3 4 3 8 0 12" stroke="#fff" /></Svg>
          <Svg className="h-3.5 w-6" box="0 0 24 14">
            <path d="M.5 1.500h23v11H.5z" stroke="#fff" strokeWidth="1.200" />
            <path d="M3 4.500h18M3 7h18" stroke="#fff" strokeDasharray="1.500 1" /><path d="M5 10h14" stroke="#fff" />
          </Svg>
          <span className="w-4 text-sm leading-4">中</span>
          <Sogou className="ml-1 size-4" />
        </div>
        <div className="ml-3 flex h-10 w-[66px] flex-col justify-center gap-0.5"><span>19:16</span><span>2017/11/1</span></div>
        <button type="button" aria-label="通知" className="relative flex h-10 w-[51px] items-center justify-center bg-black">
          <Svg className="mb-1 mr-1.5 size-4"><path d="M0 0h16v12H9l-3 3v-3H0z" fill="#fff" /><path d="M2.500 3.500h11M2.500 6h11M2.500 8.500h7" stroke="#000" /></Svg>
          <span className="absolute bottom-1 right-3.5 size-4 rounded-full border border-[#888] bg-[#222] text-xs leading-[14px]">2</span>
        </button>
        <span className="h-10 w-[5px] border-l border-[#666]" />
      </div>
    </footer>
  );
}

const Ring = ({ at }: { at: string }) => <div className={`pointer-events-none absolute z-30 rounded-[50%] border-[7px] border-[#f00] ${at}`} />;

export default function App() {
  return (
    <div className="relative flex min-h-screen flex-col overflow-hidden bg-[#f0f0f0] font-['Noto_Sans','Noto_Sans_CJK_SC',sans-serif] text-xs text-black">
      <TitleBar />
      <MenuBar />
      <MainToolbar />
      <div className="flex flex-1 border-t border-white">
        <NavPane />
        <Workspace />
      </div>
      <StatusBar />
      <Taskbar />
      <ScaleDialog />
      <div className="absolute -top-[31px] right-[179px] z-20 flex size-[50px] items-end justify-center rounded-full border-2 border-[#dcdcdc] bg-[#48c860] text-[13px] font-bold leading-4 text-white shadow-[0_2px_10px_rgba(0,0,0,0.5)] ring-1 ring-[#1e8a4a] ring-inset">69</div>
      <Ring at="left-[605px] top-[72px] h-[43px] w-[101px]" />
      <Ring at="-left-[2px] top-[335px] h-[69px] w-[176px]" />
      <Ring at="left-[368px] top-[358px] h-[88px] w-[313px]" />
      <Ring at="left-[703px] top-[514px] h-[111px] w-[240px]" />
    </div>
  );
}
